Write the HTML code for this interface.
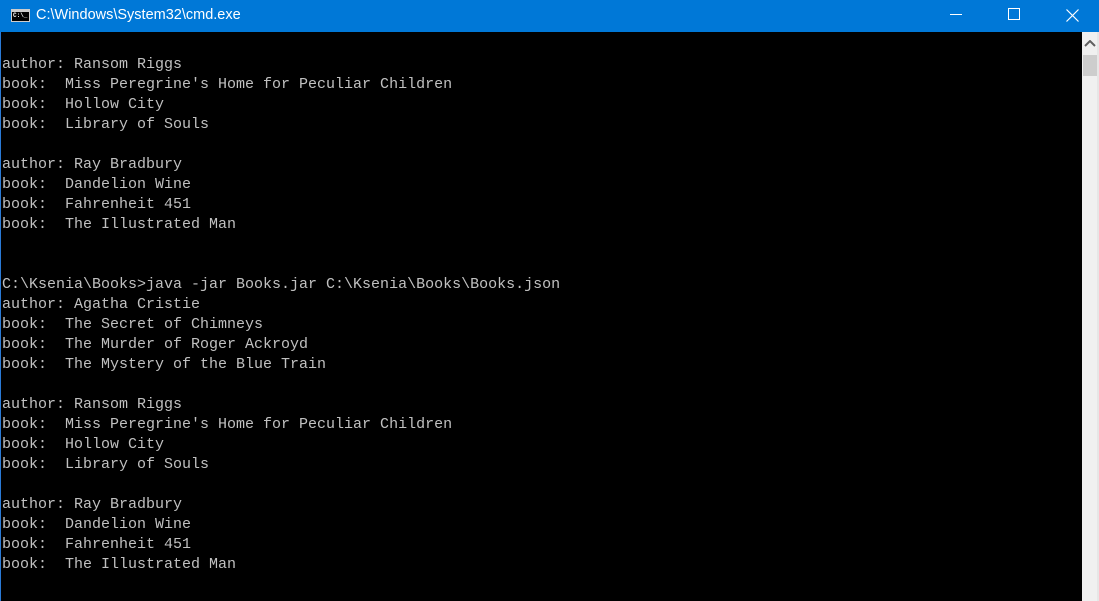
<!DOCTYPE html>
<html><head><meta charset="utf-8"><style>
*{margin:0;padding:0;box-sizing:border-box}
html,body{width:1099px;height:601px;overflow:hidden;background:#000}
.title{position:absolute;left:0;top:0;width:1099px;height:32px;background:#0078d7;color:#fff;font:14px "Liberation Sans",sans-serif}
.title .t{position:absolute;left:36px;top:7px;font-size:14.5px}
.ico{position:absolute;left:11px;top:9px;width:19px;height:13px;background:#000;border:1px solid #ccc;border-top:3px solid #ccc}
.ico span{position:absolute;left:1px;top:0px;color:#fff;font:bold 6px "Liberation Mono",monospace}
.min{position:absolute;left:950px;top:14px;width:12px;height:1px;background:#fff}
.max{position:absolute;left:1008px;top:8px;width:12px;height:12px;border:1px solid #fff}
.left{position:absolute;left:0;top:32px;width:1px;height:569px;background:#2a7ad6}
.sb{position:absolute;left:1082px;top:32px;width:15px;height:569px;background:#f0f0f0}
.sbe{position:absolute;left:1097px;top:32px;width:2px;height:569px;background:#e6e6e6}
.thumb{position:absolute;left:1083px;top:55px;width:14px;height:21px;background:#cdcdcd}
pre{position:absolute;left:2px;top:55px;color:#c0c0c0;font:15px/20px "Liberation Mono",monospace;letter-spacing:0}
</style></head><body>
<div class="title"><div class="ico"><span>C:\_</span></div><div class="t">C:\Windows\System32\cmd.exe</div>
<div class="min"></div><div class="max"></div>
<svg style="position:absolute;left:1066px;top:9px" width="13" height="13"><path d="M0.5 0.5L12.5 12.5M12.5 0.5L0.5 12.5" stroke="#fff" stroke-width="1.2"/></svg>
</div>
<div class="left"></div>
<pre>author: Ransom Riggs
book:  Miss Peregrine's Home for Peculiar Children
book:  Hollow City
book:  Library of Souls

author: Ray Bradbury
book:  Dandelion Wine
book:  Fahrenheit 451
book:  The Illustrated Man


C:\Ksenia\Books>java -jar Books.jar C:\Ksenia\Books\Books.json
author: Agatha Cristie
book:  The Secret of Chimneys
book:  The Murder of Roger Ackroyd
book:  The Mystery of the Blue Train

author: Ransom Riggs
book:  Miss Peregrine's Home for Peculiar Children
book:  Hollow City
book:  Library of Souls

author: Ray Bradbury
book:  Dandelion Wine
book:  Fahrenheit 451
book:  The Illustrated Man</pre>
<div class="sb"></div><div class="sbe"></div>
<svg style="position:absolute;left:1084px;top:40px" width="12" height="8"><path d="M1 6L6 1L11 6" stroke="#606060" stroke-width="2" fill="none"/></svg>
<div class="thumb"></div>
</body></html>
